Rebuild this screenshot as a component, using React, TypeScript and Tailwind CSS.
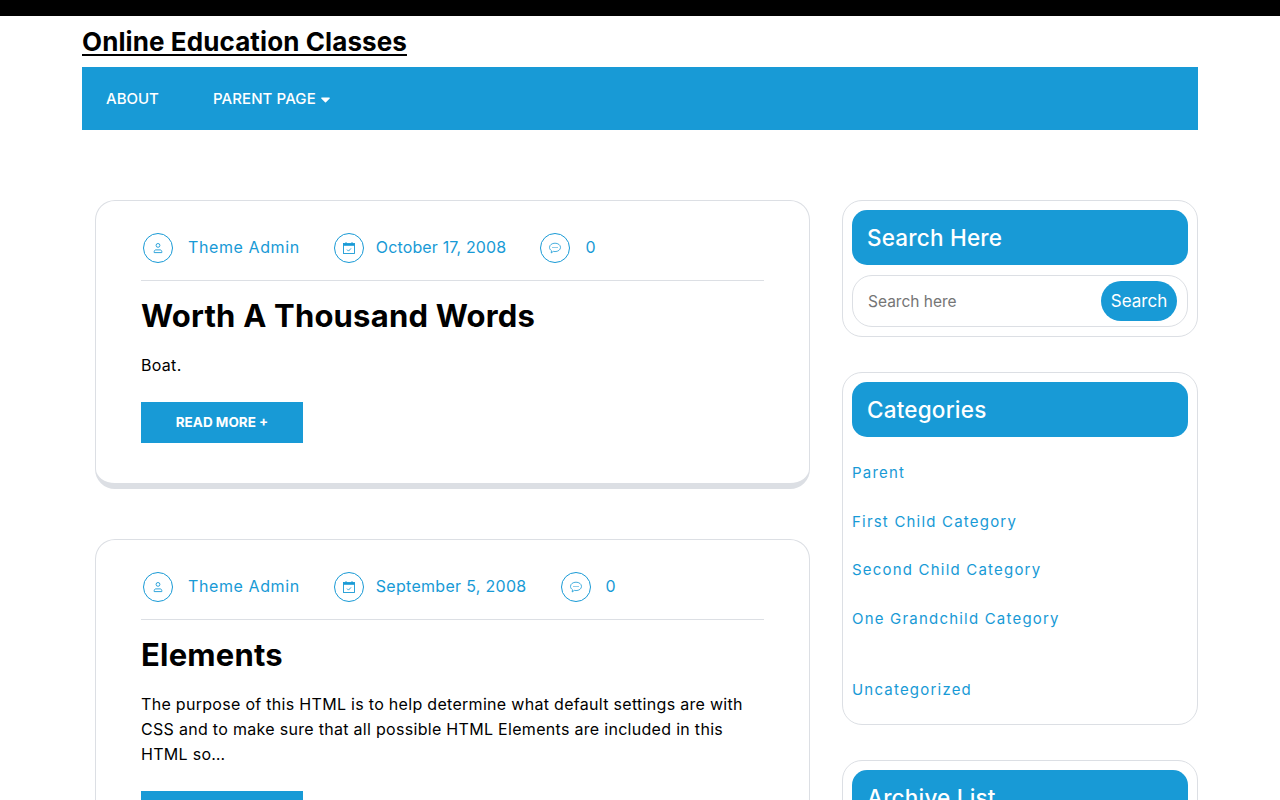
const font = "font-['Inter','Liberation_Sans',sans-serif]";

function UserIcon() {
  return (
    <svg width="12" height="12" viewBox="0 0 12 12" fill="none" stroke="currentColor" strokeWidth="0.9">
      <circle cx="6" cy="3.4" r="1.9" />
      <path d="M2.200 10.600V9.600c0-1 .8-1.700 1.700-1.700h4.200c.9 0 1.700.7 1.700 1.700v1z" />
    </svg>
  );
}

function CalendarIcon() {
  return (
    <svg width="14" height="14" viewBox="0 0 14 14" fill="none" stroke="currentColor" strokeWidth="0.9">
      <rect x="1.500" y="2.500" width="11" height="10" />
      <path d="M1.500 3.800h11" strokeWidth="2" />
      <path d="M4 1v2M10 1v2" />
      <path d="M5 8.600l1.500 1.500L9 7.400" />
    </svg>
  );
}

function ChatIcon() {
  return (
    <svg width="14" height="14" viewBox="0 0 14 14" fill="none" stroke="currentColor" strokeWidth="0.8">
      <path d="M7 2.200c3.100 0 5.500 1.800 5.500 4.200S10.100 10.600 7 10.600c-.6 0-1.200-.1-1.700-.2L3.200 12l.3-2.300C2.200 8.900 1.500 7.700 1.500 6.400 1.500 4 3.900 2.200 7 2.200z" />
      <path d="M4.500 6.500h1M6.500 6.500h1M8.500 6.500h1" strokeWidth="1.200" />
    </svg>
  );
}

function MetaIcon({ children }: { children: React.ReactNode }) {
  return (
    <span className="flex h-[30px] w-[30px] items-center justify-center rounded-full border border-[#189ad6] text-[#189ad6]">
      {children}
    </span>
  );
}

function PostCard({ date, dateClass, title, text }: { date: string; dateClass: string; title: string; text: React.ReactNode }) {
  return (
    <article className="rounded-[20px] border border-b-[6px] border-[#dcdfe4] bg-white px-[45px] pt-[32px] pb-[40px]">
      <div className="flex h-[48px] items-start border-b border-[#dcdfe4] pl-[2px] text-[16px] text-[#189ad6]">
        <MetaIcon><UserIcon /></MetaIcon>
        <span className="ml-[15px] leading-[28px] tracking-[0.6px]">Theme Admin</span>
        <span className="ml-[34px]"><MetaIcon><CalendarIcon /></MetaIcon></span>
        <span className={`ml-[12px] leading-[28px] ${dateClass}`}>{date}</span>
        <span className="ml-[34px]"><MetaIcon><ChatIcon /></MetaIcon></span>
        <span className="ml-[15px] leading-[28px]">0</span>
      </div>
      <h2 className="mt-[15px] text-[31px] leading-[40px] font-bold tracking-[0.2px] text-black">{title}</h2>
      <p className="mt-[17px] text-[16px] leading-[25px] tracking-[0.3px] text-black">{text}</p>
      <a className="mt-[24px] flex h-[41px] w-[162px] items-center justify-center bg-[#189ad6] text-[13.5px] font-bold text-white">
        READ MORE +
      </a>
    </article>
  );
}

function WidgetTitle({ children }: { children: React.ReactNode }) {
  return (
    <h3 className="flex h-[55px] items-center rounded-[15px] bg-[#189ad6] px-[15px] text-[22.5px] font-medium tracking-[0.2px] text-white">
      {children}
    </h3>
  );
}

const categories = [
  { name: "Parent", mt: "mt-[24px]" },
  { name: "First Child Category", mt: "mt-[25px]" },
  { name: "Second Child Category", mt: "mt-[24px]" },
  { name: "One Grandchild Category", mt: "mt-[25px]" },
  { name: "Uncategorized", mt: "mt-[47px]" },
];

export default function App() {
  return (
    <div className={`h-screen overflow-hidden bg-white ${font}`}>
      <div className="h-4 bg-black" />
      <div className="mx-[82px]">
        <a className="mt-[8px] block text-[26px] leading-[35px] font-bold tracking-[0.1px] text-black underline decoration-2 underline-offset-[3px]">
          Online Education Classes
        </a>
        <nav className="mt-[8px] flex h-[63px] items-center bg-[#189ad6] pt-[2px] pl-[24px] text-[15px] font-medium text-white">
          <span>ABOUT</span>
          <span className="ml-[54px] tracking-[0.1px]">PARENT PAGE</span>
          <svg width="9" height="6" viewBox="0 0 9 6" fill="currentColor" className="ml-[5px]">
            <path d="M.8.400h7.400c.6 0 .9.700.5 1.100L5 5.200c-.3.300-.7.300-1 0L.3 1.500C-.1 1.100.2.400.8.400z" />
          </svg>
        </nav>
        <div className="mt-[70px] flex items-start pl-[13px]">
          <main className="flex w-[715px] shrink-0 flex-col gap-[50px]">
            <PostCard date="October 17, 2008" dateClass="tracking-[0.15px]" title="Worth A Thousand Words" text="Boat." />
            <PostCard
              date="September 5, 2008"
              dateClass="tracking-[0.3px]"
              title="Elements"
              text="The purpose of this HTML is to help determine what default settings are with CSS and to make sure that all possible HTML Elements are included in this HTML so…"
            />
          </main>
          <aside className="ml-[32px] flex w-[356px] shrink-0 flex-col gap-[35px]">
            <section className="rounded-[20px] border border-[#dcdfe4] p-[9px]">
              <WidgetTitle>Search Here</WidgetTitle>
              <div className="mt-[10px] flex h-[52px] items-center justify-between rounded-[20px] border border-[#dcdfe4] pr-[10px] pl-[15px]">
                <span className="pt-[2px] text-[15.5px] text-[#757575]">Search here</span>
                <button className="h-[40px] w-[76px] rounded-[20px] bg-[#189ad6] pt-[2px] text-[17px] text-white">Search</button>
              </div>
            </section>
            <section className="rounded-[20px] border border-[#dcdfe4] p-[9px] pb-[22px]">
              <WidgetTitle>Categories</WidgetTitle>
              <ul className="text-[15px] leading-[24px] tracking-[1.2px] text-[#189ad6]">
                {categories.map((c) => (
                  <li key={c.name} className={c.mt}>{c.name}</li>
                ))}
              </ul>
            </section>
            <section className="rounded-[20px] border border-[#dcdfe4] p-[9px]">
              <WidgetTitle>Archive List</WidgetTitle>
            </section>
          </aside>
        </div>
      </div>
    </div>
  );
}
